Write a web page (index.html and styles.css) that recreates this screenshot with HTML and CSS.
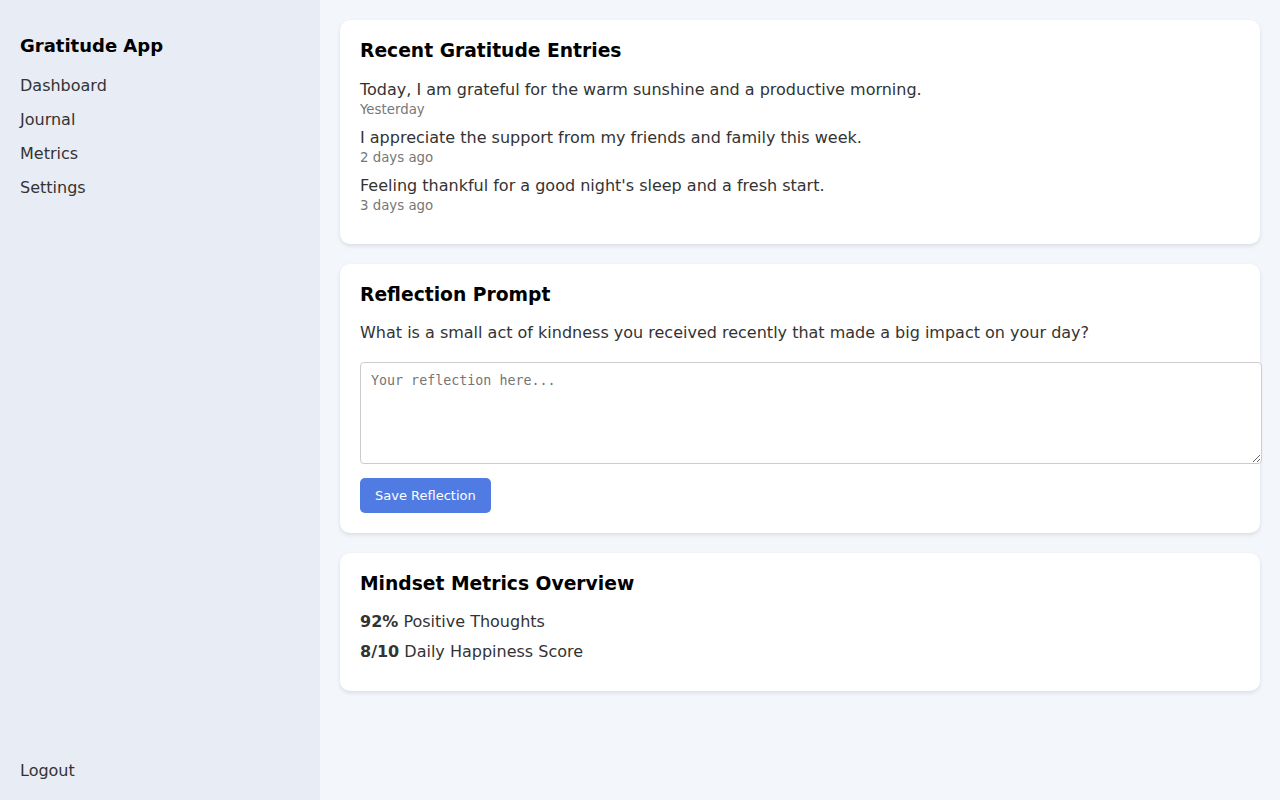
FILE: index.html
```html
<!DOCTYPE html>
<html lang="en">
<head>
<meta charset="utf-8">
<title>Gratitude App</title>
<link rel="stylesheet" href="styles.css">
</head>
<body>
<div class="app">
  <aside class="sidebar">
    <h2 class="brand">Gratitude App</h2>
    <nav class="nav">
      <a class="nav-link" href="#">Dashboard</a>
      <a class="nav-link" href="#">Journal</a>
      <a class="nav-link" href="#">Metrics</a>
      <a class="nav-link" href="#">Settings</a>
    </nav>
    <a class="logout" href="#">Logout</a>
  </aside>
  <main class="main">
    <section class="card">
      <h3 class="card-title">Recent Gratitude Entries</h3>
      <div class="entry">
        <div class="entry-text">Today, I am grateful for the warm sunshine and a productive morning.</div>
        <div class="entry-date">Yesterday</div>
      </div>
      <div class="entry">
        <div class="entry-text">I appreciate the support from my friends and family this week.</div>
        <div class="entry-date">2 days ago</div>
      </div>
      <div class="entry">
        <div class="entry-text">Feeling thankful for a good night's sleep and a fresh start.</div>
        <div class="entry-date">3 days ago</div>
      </div>
    </section>
    <section class="card">
      <h3 class="card-title">Reflection Prompt</h3>
      <p class="prompt">What is a small act of kindness you received recently that made a big impact on your day?</p>
      <textarea class="reflection" placeholder="Your reflection here..."></textarea>
      <button class="btn" type="button">Save Reflection</button>
    </section>
    <section class="card">
      <h3 class="card-title">Mindset Metrics Overview</h3>
      <p class="metric"><strong>92%</strong> Positive Thoughts</p>
      <p class="metric"><strong>8/10</strong> Daily Happiness Score</p>
    </section>
  </main>
</div>
</body>
</html>
```
FILE: styles.css
```css
* { box-sizing: border-box; }
html, body {
  margin: 0;
  padding: 0;
  height: 100%;
}
body {
  font-family: "DejaVu Sans", sans-serif;
  color: #333;
  background: #f3f6fb;
}
.app {
  display: flex;
  min-height: 800px;
}
.sidebar {
  width: 320px;
  flex-shrink: 0;
  background: #e8ecf5;
  padding: 20px;
  display: flex;
  flex-direction: column;
}
.brand {
  font-size: 18px;
  line-height: 21px;
  font-weight: bold;
  color: #000;
  margin: 15px 0 13px;
}
.nav {
  display: flex;
  flex-direction: column;
}
.nav-link {
  display: block;
  font-size: 16px;
  line-height: 18px;
  padding: 8px 0;
  color: #333;
  text-decoration: none;
}
.logout {
  margin-top: auto;
  font-size: 16px;
  line-height: 19px;
  color: #333;
  text-decoration: none;
}
.main {
  flex: 1;
  padding: 20px;
  display: flex;
  flex-direction: column;
  gap: 20px;
}
.card {
  background: #fff;
  border-radius: 10px;
  box-shadow: 0 2px 4px rgba(0, 0, 0, 0.1);
  padding: 20px;
}
.card-title {
  font-size: 18.72px;
  line-height: 22px;
  font-weight: bold;
  color: #000;
  margin: 0 0 17.5px;
}
.entry {
  margin-bottom: 10.17px;
}
.entry-text {
  font-size: 16px;
  line-height: 19px;
}
.entry-date {
  font-size: 13.33px;
  line-height: 16px;
  margin-top: 3px;
  color: #777;
}
.prompt {
  font-size: 16px;
  line-height: 19px;
  margin: 0 0 19.5px;
}
.reflection {
  display: block;
  box-sizing: content-box;
  width: 100%;
  height: 80px;
  padding: 10px;
  border: 1px solid #ccc;
  border-radius: 4px;
  font-family: "DejaVu Sans Mono", monospace;
  font-size: 13.33px;
  margin: 0 0 14px;
  background: #fff;
  color: #333;
}
.reflection::placeholder {
  color: #757575;
}
.btn {
  display: block;
  background: #4f7be3;
  color: #fff;
  border: none;
  border-radius: 5px;
  padding: 10px 15px;
  font-family: "DejaVu Sans", sans-serif;
  font-size: 13px;
  line-height: 15px;
  cursor: pointer;
}
.metric {
  font-size: 16px;
  line-height: 19px;
  margin: 0 0 10.25px;
}
.metric strong {
  font-weight: bold;
}
```
